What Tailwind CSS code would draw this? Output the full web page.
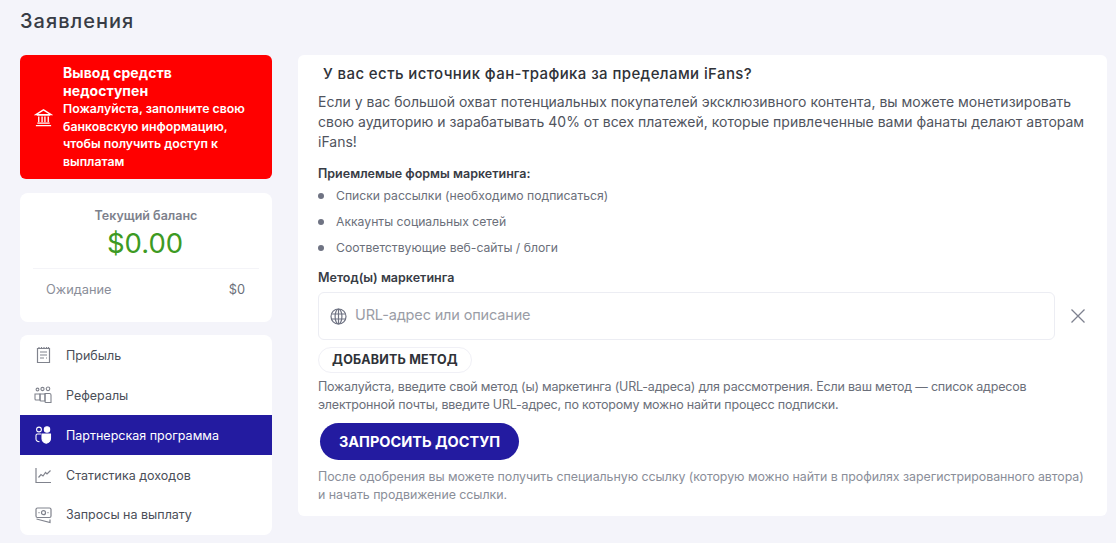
<!DOCTYPE html>
<html lang="ru">
<head>
  <meta charset="UTF-8">
  <meta name="viewport" content="width=device-width, initial-scale=1.0">
  <title>Заявления</title>
  <script src="https://cdn.jsdelivr.net/npm/@tailwindcss/browser@4"></script>
</head>
<body class="bg-[#f4f4fa] text-[#383c45] font-['Inter',sans-serif] h-[543px] overflow-hidden">
  <h1 class="pl-5 pt-[9px] h-[55px] text-[20px] leading-[25px] font-medium tracking-[1px]">Заявления</h1>

  <div class="flex items-start pl-5 gap-[26px]">
    <!-- sidebar -->
    <aside class="w-[252px] flex flex-col gap-[14px]">
      <div class="h-[124px] bg-[#ff0000] rounded-[6px] flex items-center text-white pl-[14px] pr-3">
        <svg class="w-[19px] h-[19px] shrink-0" viewBox="0 0 20 20" fill="none" stroke="currentColor" stroke-width="1.4">
          <path d="M2 7 L10 2 L18 7 Z M3 7.5 H17"/>
          <path d="M5 9 V15 M8.5 9 V15 M11.5 9 V15 M15 9 V15"/>
          <path d="M3.5 16 H16.5 M2 18.5 H18"/>
        </svg>
        <div class="ml-[10px]">
          <div class="text-[14px] leading-[18px] font-bold tracking-[0.05px]">Вывод средств недоступен</div>
          <div class="text-[12.3px] leading-[17.5px] font-semibold">Пожалуйста, заполните свою банковскую информацию, чтобы получить доступ к выплатам</div>
        </div>
      </div>

      <div class="h-[129px] bg-white rounded-[8px] px-[13px] pt-[14px]">
        <div class="text-center text-[12.5px] leading-[17px] font-semibold text-[#7d818c]">Текущий баланс</div>
        <div class="text-center text-[27.5px] leading-[36px] text-[#3d9a23] mt-[1px] pr-[2px]">$0.00</div>
        <div class="border-t border-[#f4f4f8] mt-[7px] pt-[12px] pl-[13px] pr-[14px] flex justify-between text-[12.8px] leading-[18px]">
          <span class="text-[#8a8e99]">Ожидание</span>
          <span class="text-[#6b6f7a]">$0</span>
        </div>
      </div>

      <nav class="-mt-px bg-white rounded-[8px] overflow-hidden text-[12.5px] text-[#4a4e58]">
        <a class="flex items-center h-10 pl-[15px]">
          <svg class="w-[17px] h-[18px] shrink-0 text-[#80838d]" viewBox="0 0 17 18" fill="none" stroke="currentColor" stroke-width="1.2">
            <path d="M2.5 2.5 H14.5 V16.5 H2.5 Z"/>
            <path d="M4 1 V3 M6.5 1 V3 M9 1 V3 M11.5 1 V3 M13.5 1 V3"/>
            <path d="M5 6 H12 M5 9 H12 M5 12 H9 M11 12 H12" />
          </svg>
          <span class="ml-[14px] pt-[2px]">Прибыль</span>
        </a>
        <a class="flex items-center h-10 pl-[14px]">
          <svg class="w-[18px] h-[18px] shrink-0 text-[#80838d]" viewBox="0 0 18 18" fill="none" stroke="currentColor" stroke-width="1.1">
            <circle cx="3.5" cy="3.5" r="1.4"/><circle cx="8.5" cy="3" r="1.6"/><circle cx="14" cy="2.8" r="1.8"/>
            <path d="M1 8 H6 V14 H2 Q1 14 1 13 Z"/>
            <path d="M6 8 H11 V15 H7 Q6 15 6 14 Z"/>
            <path d="M11 7.5 H15.5 Q17 7.5 17 9 V16.5 H12 Q11 16.5 11 15.5 Z"/>
          </svg>
          <span class="ml-[14px] pt-[2px]">Рефералы</span>
        </a>
        <a class="flex items-center h-10 pl-[15px] bg-[#231ba0] text-white">
          <svg class="w-[17px] h-[18px] shrink-0" viewBox="0 0 17 18" fill="none" stroke="currentColor" stroke-width="1.1">
            <circle cx="4" cy="3.5" r="2.4"/>
            <circle cx="12" cy="3.5" r="2.7" fill="currentColor"/>
            <path d="M6 8 H2.5 Q1 8 1 9.5 V13 Q1 15.5 4.5 15.8"/>
            <path d="M7 8 H15.5 V12.5 Q15.5 16 11.2 17.2 Q7 16 7 12.5 Z" fill="currentColor"/>
          </svg>
          <span class="ml-[14px] pt-[2px]">Партнерская программа</span>
        </a>
        <a class="flex items-center h-10 pl-[15px]">
          <svg class="w-[17px] h-[17px] shrink-0 text-[#80838d]" viewBox="0 0 17 17" fill="none" stroke="currentColor" stroke-width="1.2">
            <path d="M1 1 V15.5 H16"/>
            <path d="M3.5 10.5 L6 7.5 L8 9 L10.5 5.5 L12 7 L15.5 3.5"/>
          </svg>
          <span class="ml-[14px] pt-[2px]">Статистика доходов</span>
        </a>
        <a class="flex items-center h-10 pl-[15px]">
          <svg class="w-[17px] h-[17px] shrink-0 text-[#80838d]" viewBox="0 0 17 17" fill="none" stroke="currentColor" stroke-width="1.2">
            <rect x="1" y="1" width="15" height="9.5" rx="1.5"/>
            <circle cx="8.5" cy="5.7" r="2"/>
            <path d="M3.5 5.7 H4.5 M12.5 5.7 H13.5"/>
            <path d="M1.5 12 L15 15.5 V12.5"/>
          </svg>
          <span class="ml-[14px]">Запросы на выплату</span>
        </a>
      </nav>
    </aside>

    <!-- main card -->
    <main class="w-[809px] h-[461px] bg-white rounded-[6px] pl-5 pr-5 pt-[9px]">
      <h2 class="pl-[5px] text-[15px] leading-[20px] font-medium text-[#2f3238] tracking-[0.4px]">У вас есть источник фан-трафика за пределами iFans?</h2>
      <p class="mt-[8px] text-[14px] leading-[20px] text-[#50545e]">Если у вас большой охват потенциальных покупателей эксклюзивного контента, вы можете монетизировать свою аудиторию и зарабатывать 40% от всех платежей, которые привлеченные вами фанаты делают авторам iFans!</p>

      <div class="mt-[13px] text-[12.5px] leading-[17px] font-semibold text-[#383c45]">Приемлемые формы маркетинга:</div>
      <ul class="mt-[1px] text-[12.2px] text-[#6b6f7a]">
        <li class="flex items-center h-[26px]"><span class="w-[6px] h-[6px] rounded-full bg-[#6f7383]"></span><span class="ml-3">Списки рассылки (необходимо подписаться)</span></li>
        <li class="flex items-center h-[26px]"><span class="w-[6px] h-[6px] rounded-full bg-[#6f7383]"></span><span class="ml-3">Аккаунты социальных сетей</span></li>
        <li class="flex items-center h-[26px]"><span class="w-[6px] h-[6px] rounded-full bg-[#6f7383]"></span><span class="ml-3">Соответствующие веб-сайты / блоги</span></li>
      </ul>

      <div class="mt-[8px] text-[12.5px] leading-[17px] font-semibold text-[#383c45]">Метод(ы) маркетинга</div>

      <div class="mt-[6px] flex items-center">
        <div class="w-[737px] h-[48px] border border-[#ecedf3] rounded-[6px] flex items-center pl-[11px]">
          <svg class="w-[17px] h-[17px] shrink-0 text-[#6f7383]" viewBox="0 0 17 17" fill="none" stroke="currentColor" stroke-width="1.2">
            <circle cx="8.5" cy="8.5" r="7.5"/>
            <ellipse cx="8.5" cy="8.5" rx="3.4" ry="7.5"/>
            <path d="M8.5 1 V16 M1.5 6 H15.5 M1.5 11 H15.5"/>
          </svg>
          <span class="ml-[8px] pb-[2px] text-[14.5px] text-[#9a9da6] tracking-[-0.15px]">URL-адрес или описание</span>
        </div>
        <svg class="w-[16px] h-[16px] ml-[15px] text-[#7d818f]" viewBox="0 0 16 16" fill="none" stroke="currentColor" stroke-width="1.3">
          <path d="M1.5 1.5 L14.5 14.5 M14.5 1.5 L1.5 14.5"/>
        </svg>
      </div>

      <button class="mt-[7px] block h-[26px] w-[154px] border border-[#f0f0f6] rounded-full text-[12.5px] font-bold text-[#2f3238] tracking-[0.2px]">ДОБАВИТЬ МЕТОД</button>

      <p class="mt-[5px] text-[12.5px] leading-[18px] text-[#6b6f7a] tracking-[-0.2px]">Пожалуйста, введите свой метод (ы) маркетинга (URL-адреса) для рассмотрения. Если ваш метод — список адресов электронной почты, введите URL-адрес, по которому можно найти процесс подписки.</p>

      <button class="mt-[9px] block h-[37px] w-[199px] ml-[2px] rounded-full bg-[#231ba0] text-white text-[14.5px] font-bold">ЗАПРОСИТЬ ДОСТУП</button>

      <p class="mt-[8px] text-[12.4px] leading-[18px] text-[#8a8e99] tracking-[-0.05px]">После одобрения вы можете получить специальную ссылку (которую можно найти в профилях зарегистрированного автора) и начать продвижение ссылки.</p>
    </main>
  </div>
</body>
</html>
